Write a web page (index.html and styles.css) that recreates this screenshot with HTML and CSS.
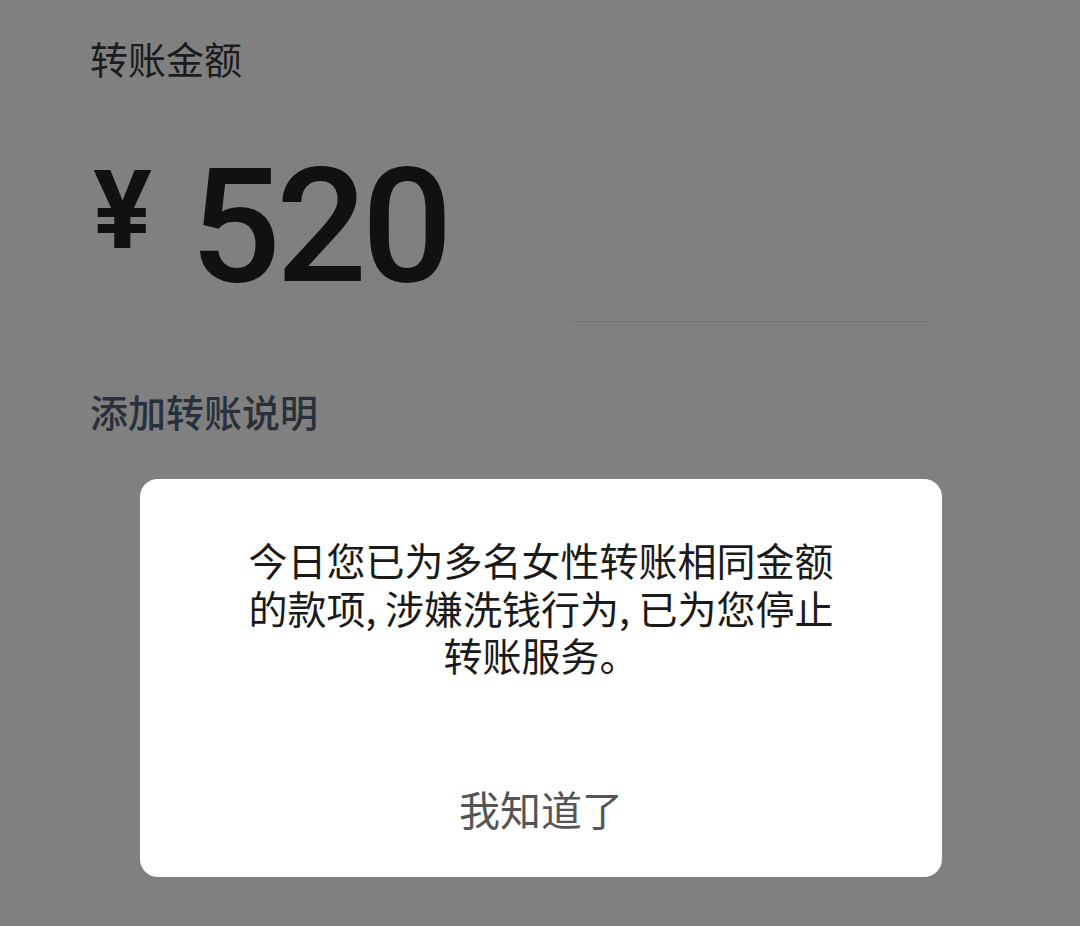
FILE: index.html
```html
<!DOCTYPE html>
<html lang="zh-CN">

<head>
    <meta charset="UTF-8">
    <meta name="viewport" content="width=device-width, initial-scale=1.0">
    <title>转账</title>
    <link rel="stylesheet" href="styles.css">
</head>

<body>
    <main class="transfer">
        <div class="label">转账金额</div>

        <div class="amount">
            <span class="currency">¥</span>
            <span class="value">520</span>
        </div>
        <div class="amount-line"></div>

        <div class="remark">添加转账说明</div>
    </main>

    <!-- dialog over the form -->
    <div class="dialog">
        <p class="dialog-text">今日您已为多名女性转账相同金额<br>的款项, 涉嫌洗钱行为, 已为您停止<br>转账服务。</p>
        <div class="dialog-btn">我知道了</div>
    </div>
</body>

</html>
```

FILE: styles.css
```css
body {
    margin: 0;
    min-height: 926px;
    background-color: #808080;
    font-family: "Noto Sans CJK SC", "Noto Sans", sans-serif;
    color: #1e1e1e;
}

.transfer {
    display: flex;
    flex-direction: column;
    padding: 30px 0 0 90px;
}

.label {
    font-size: 38px;
    line-height: 56px;
    color: #1c1c1c;
}

.amount {
    display: flex;
    align-items: flex-start;
    margin-top: 61px;
    color: #111;
    font-family: Roboto, "Noto Sans", sans-serif;
}

.currency {
    font-size: 110px;
    line-height: 1;
    font-weight: 700;
    margin: 9px 0 0 3px;
}

.value {
    font-size: 160px;
    line-height: 1;
    font-weight: 500;
    letter-spacing: -5px;
    margin-left: 38px;
}

.amount-line {
    width: 360px;
    height: 1px;
    margin: 14px 0 0 480px;
    background-color: #747474;
}

.remark {
    margin-top: 61px;
    font-size: 38px;
    line-height: 56px;
    font-weight: 500;
    color: #2a303a;
}

.dialog {
    position: fixed;
    left: 140px;
    top: 479px;
    width: 802px;
    height: 398px;
    box-sizing: border-box;
    display: flex;
    flex-direction: column;
    justify-content: space-between;
    align-items: center;
    padding: 57px 0 29px;
    background-color: #fff;
    border-radius: 18px;
}

.dialog-text {
    margin: 0;
    font-size: 39px;
    line-height: 47.5px;
    text-align: center;
    color: #1a1a1a;
}

.dialog-btn {
    font-size: 41px;
    line-height: 80px;
    color: #555;
}
```
